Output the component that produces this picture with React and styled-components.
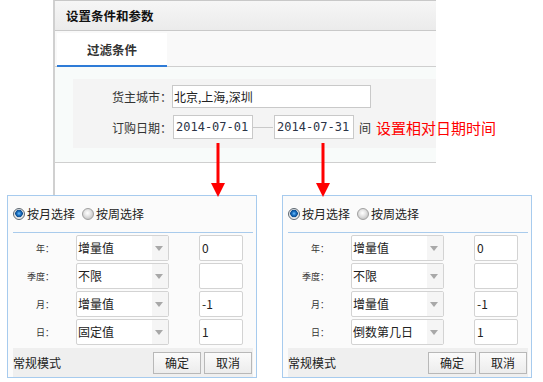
import React from 'react'
import styled, {createGlobalStyle} from 'styled-components'

const GlobalStyle = createGlobalStyle`
    body {
        margin: 0;
        background: #fff;
        font-family: "Noto Sans CJK SC", "Liberation Sans", sans-serif;
        color: #333;
    }
`

const popups = [
    [
        {label: '年：', kind: '增量值', value: '0'},
        {label: '季度：', kind: '不限', value: ''},
        {label: '月：', kind: '增量值', value: '-1'},
        {label: '日：', kind: '固定值', value: '1'},
    ],
    [
        {label: '年：', kind: '增量值', value: '0'},
        {label: '季度：', kind: '不限', value: ''},
        {label: '月：', kind: '增量值', value: '-1'},
        {label: '日：', kind: '倒数第几日', value: '1'},
    ],
]

function DownArrow({x}) {
    return (
        <ArrowWrap x={x}>
            <svg width="14" height="54" viewBox="0 0 14 54">
                <rect x="5.5" y="0" width="3" height="41" fill="#ff0000" />
                <polygon points="0,40 14,40 7,54" fill="#ff0000" />
            </svg>
        </ArrowWrap>
    )
}

function Popup({rows}) {
    return (
        <PopBox>
            <RadioRow>
                <Radio checked />
                <RadioText>按月选择</RadioText>
                <Radio />
                <RadioText>按周选择</RadioText>
            </RadioRow>
            <Rows>
                {rows.map((r, i) => (
                    <Row key={i}>
                        <RowLabel>{r.label}</RowLabel>
                        <Select>
                            <SelectText>{r.kind}</SelectText>
                            <Caret />
                        </Select>
                        <ValueInput>{r.value}</ValueInput>
                    </Row>
                ))}
            </Rows>
            <Footer>
                <FooterText>常规模式</FooterText>
                <Button>确定</Button>
                <Button>取消</Button>
            </Footer>
        </PopBox>
    )
}

function App() {
    return (
        <Page>
            <GlobalStyle />
            <TopPanel>
                <Header>
                    <Title>设置条件和参数</Title>
                </Header>
                <TabBar>
                    <Tab>过滤条件</Tab>
                </TabBar>
                <Body>
                    <FormBox>
                        <FormRow h={23}>
                            <FieldLabel>货主城市：</FieldLabel>
                            <CityInput>北京,上海,深圳</CityInput>
                        </FormRow>
                        <FormRow h={24}>
                            <FieldLabel>订购日期：</FieldLabel>
                            <DateBox>2014-07-01</DateBox>
                            <Dash />
                            <DateBox>2014-07-31</DateBox>
                            <Between>间</Between>
                            <Note>设置相对日期时间</Note>
                        </FormRow>
                    </FormBox>
                </Body>
            </TopPanel>
            <DownArrow x={218} />
            <DownArrow x={323} />
            <Popups>
                {popups.map((rows, i) => <Popup key={i} rows={rows} />)}
            </Popups>
        </Page>
    )
}

export default App

const Page = styled.div`
    position: relative;
    width: 543px;
    height: 382px;
    overflow: hidden;
`

const TopPanel = styled.div`
    margin-left: 53px;
    width: 383px;
    height: 195px;
    box-sizing: border-box;
    border-left: 2px solid #d0d0d0;
    border-top: 1px solid #c8c8c8;
`

const Header = styled.div`
    height: 29px;
    border-bottom: 1px solid #c9c9c9;
    background: linear-gradient(#f6f6f6, #ebebeb);
    display: flex;
    align-items: center;
    padding-left: 11px;
`

const Title = styled.div`
    font-size: 12.5px;
    font-weight: bold;
    color: #111;
    line-height: 14px;
`

const TabBar = styled.div`
    height: 35px;
    background: #f9f9f9;
    border-bottom: 1px solid #cfcfcf;
    display: flex;
    align-items: flex-end;
    padding-left: 2px;
`

const Tab = styled.div`
    width: 110px;
    height: 34px;
    box-sizing: border-box;
    margin-bottom: -1px;
    background: #fff;
    border-bottom: 2px solid #2e7bd7;
    font-size: 12.5px;
    font-weight: bold;
    color: #333;
    display: flex;
    align-items: center;
    justify-content: center;
`

const Body = styled.div`
    height: 96px;
    box-sizing: border-box;
    background: #f8fbfa;
    border-bottom: 1px solid #cfcfcf;
    padding: 12px 0 0 18px;
`

const FormBox = styled.div`
    height: 69px;
    box-sizing: border-box;
    background: #f4f4f4;
    padding-top: 6px;
    display: flex;
    flex-direction: column;
    gap: 7px;
`

const FormRow = styled.div`
    height: ${props => props.h}px;
    display: flex;
    align-items: center;
    & > * { flex-shrink: 0; }
`

const FieldLabel = styled.div`
    width: 99px;
    text-align: right;
    font-size: 12px;
    color: #333;
`

const CityInput = styled.div`
    width: 199px;
    height: 23px;
    box-sizing: border-box;
    border: 1px solid #c9c9c9;
    background: #fff;
    font-size: 12px;
    line-height: 21px;
    padding-left: 1px;
    color: #222;
`

const DateBox = styled.div`
    width: 80px;
    height: 24px;
    box-sizing: border-box;
    border: 1px solid #c9c9c9;
    background: #fff;
    font-family: "DejaVu Sans Mono", monospace;
    font-size: 12px;
    line-height: 22px;
    padding-left: 2px;
    color: #2c3446;
    margin-left: 1px;
    white-space: nowrap;
`

const Dash = styled.div`
    width: 20px;
    height: 1px;
    background: #c9c9c9;
`

const Between = styled.div`
    margin-left: 5px;
    font-size: 12px;
    color: #333;
`

const Note = styled.div`
    margin-left: 5px;
    font-size: 15px;
    color: #ff0000;
    white-space: nowrap;
`

const ArrowWrap = styled.div`
    position: absolute;
    top: 143px;
    left: ${props => props.x - 7}px;
    width: 14px;
    height: 54px;
    z-index: 2;
    svg { display: block; }
`

const Popups = styled.div`
    display: flex;
    gap: 25px;
    padding-left: 7px;
`

const PopBox = styled.div`
    width: 250px;
    height: 183px;
    box-sizing: border-box;
    border: 1px solid #a7cbee;
    background: #fbfbfb;
    padding: 0 3px 0 5px;
    display: flex;
    flex-direction: column;
`

const RadioRow = styled.div`
    height: 37px;
    box-sizing: border-box;
    border-bottom: 1px solid #a9cbec;
    display: flex;
    align-items: center;
    padding-bottom: 1px;
`

const Radio = styled.span`
    width: 12px;
    height: 12px;
    box-sizing: border-box;
    border-radius: 50%;
    border: 1px solid ${props => props.checked ? '#5d6770' : '#a0a0a0'};
    background: ${props => props.checked
        ? 'radial-gradient(circle at 50% 45%, #6cc0ff 0, #1a6fc0 2px, #0c4d90 3.5px, #cfd6dc 4px, #f2f2f2 5px)'
        : 'radial-gradient(circle at 45% 40%, #ffffff 0, #e6e6e6 3px, #c8c8c8 6px)'};
    margin-right: 2px;
`

const RadioText = styled.span`
    font-size: 12px;
    color: #222;
    margin-right: 7px;
`

const Rows = styled.div`
    margin-top: 2px;
    display: flex;
    flex-direction: column;
    gap: 2px;
`

const Row = styled.div`
    height: 26px;
    display: flex;
    align-items: center;
`

const RowLabel = styled.div`
    width: 41px;
    margin-right: 22px;
    text-align: right;
    font-size: 9px;
    color: #333;
`

const Select = styled.div`
    width: 93px;
    height: 26px;
    box-sizing: border-box;
    border: 1px solid #d3d3d3;
    border-radius: 2px;
    background: #fff;
    display: flex;
    margin-right: 30px;
`

const SelectText = styled.div`
    flex: 1;
    font-size: 12px;
    line-height: 24px;
    padding-left: 1px;
    color: #222;
    white-space: nowrap;
`

const Caret = styled.div`
    width: 16px;
    background: #f5f5f5;
    position: relative;
    &::after {
        content: '';
        position: absolute;
        left: 3px;
        top: 10px;
        border-left: 4.5px solid transparent;
        border-right: 4.5px solid transparent;
        border-top: 5px solid #a8a8a8;
    }
`

const ValueInput = styled.div`
    width: 44px;
    height: 26px;
    box-sizing: border-box;
    border: 1px solid #d3d3d3;
    border-radius: 2px;
    background: #fff;
    font-size: 12px;
    line-height: 24px;
    padding-left: 2px;
    color: #222;
`

const Footer = styled.div`
    margin-top: 3px;
    height: 29px;
    background: #efefef;
    display: flex;
    align-items: center;
    gap: 3px;
    padding-right: 1px;
`

const FooterText = styled.div`
    flex: 1;
    font-size: 12px;
    color: #222;
`

const Button = styled.div`
    width: 48px;
    height: 22px;
    box-sizing: border-box;
    border: 1px solid #b8b8b8;
    background: linear-gradient(#fbfbfb, #ececec);
    font-size: 12px;
    line-height: 20px;
    text-align: center;
    color: #222;
`
